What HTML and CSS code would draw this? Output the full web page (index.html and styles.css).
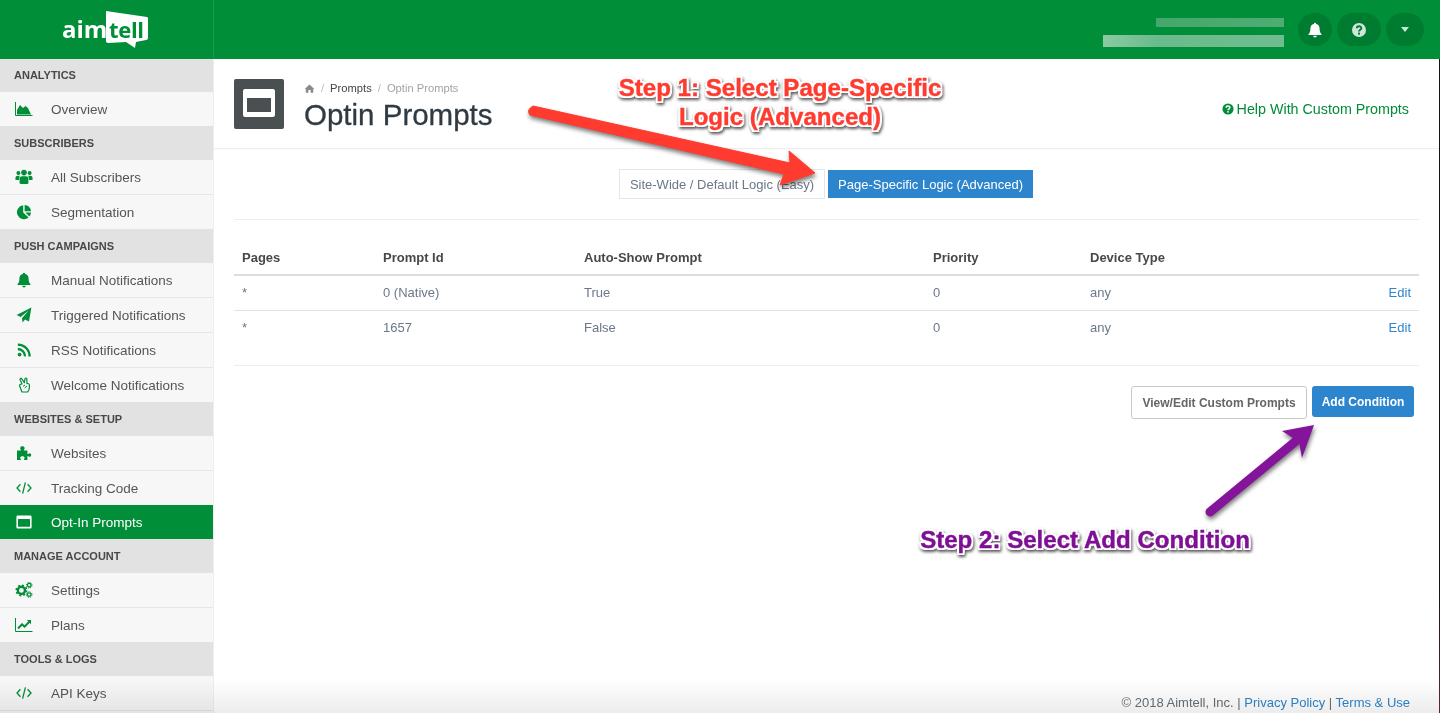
FILE: index.html
```html
<!DOCTYPE html>
<html lang="en">

<head>
  <meta charset="UTF-8" />
  <meta name="viewport" content="width=device-width,initial-scale=1.0" />
  <title>Optin Prompts</title>
  <link rel="stylesheet" href="styles.css">
</head>

<body>
  <header class="topbar">
    <a class="brand" href="#">
      <svg width="90" height="40" viewBox="0 0 90 40">
        <path d="M44 0 L85 6 Q86 6 86 8 V27 Q86 29 84 29 L74 31 L73 37 L64 31 L46 32 Q44 32 44 30 Z" fill="#fff" />
        <text x="0" y="27" class="brand-aim">aim</text>
        <text x="47" y="27" class="brand-tell">tell</text>
      </svg>
    </a>
    <div class="topbar-right">
      <div class="user-blur">
        <span class="blur-one"></span>
        <span class="blur-two"></span>
      </div>
      <button class="top-btn bell-btn">
        <svg class="ic" viewBox="0 0 16 16"><use href="#i-bell" /></svg>
      </button>
      <button class="top-btn help-btn">
        <svg class="ic" viewBox="0 0 16 16">
          <circle cx="8" cy="8" r="7" fill="#cfe6d8" />
          <path d="M5.8 6.3 C5.8 3.6 10.3 3.6 10.3 6.2 C10.3 7.8 8 7.8 8 9.6" fill="none" stroke="#007c31" stroke-width="1.9" />
          <rect x="7" y="10.6" width="2" height="2" fill="#007c31" />
        </svg>
      </button>
      <button class="top-btn caret-btn"><span class="caret"></span></button>
    </div>
  </header>

  <div class="layout">
    <nav class="sidebar">
      <div class="side-head">Analytics</div>
      <a class="side-item" href="#"><svg class="ic" viewBox="0 0 18 16"><use href="#i-area" /></svg>Overview</a>

      <div class="side-head">Subscribers</div>
      <a class="side-item" href="#"><svg class="ic" viewBox="0 0 18 16"><use href="#i-users" /></svg>All Subscribers</a>
      <a class="side-item" href="#"><svg class="ic" viewBox="0 0 16 16"><use href="#i-pie" /></svg>Segmentation</a>

      <div class="side-head">Push Campaigns</div>
      <a class="side-item" href="#"><svg class="ic" viewBox="0 0 16 16"><use href="#i-bell" /></svg>Manual Notifications</a>
      <a class="side-item" href="#"><svg class="ic" viewBox="0 0 16 16"><use href="#i-plane" /></svg>Triggered Notifications</a>
      <a class="side-item" href="#"><svg class="ic" viewBox="0 0 16 16"><use href="#i-rss" /></svg>RSS Notifications</a>
      <a class="side-item" href="#"><svg class="ic" viewBox="0 0 16 16"><use href="#i-peace" /></svg>Welcome Notifications</a>

      <div class="side-head">Websites &amp; Setup</div>
      <a class="side-item" href="#"><svg class="ic" viewBox="0 0 16 16"><use href="#i-puzzle" /></svg>Websites</a>
      <a class="side-item" href="#"><svg class="ic" viewBox="0 0 16 16"><use href="#i-code" /></svg>Tracking Code</a>
      <a class="side-item active" href="#"><svg class="ic" viewBox="0 0 16 16"><use href="#i-window" /></svg>Opt-In Prompts</a>

      <div class="side-head">Manage Account</div>
      <a class="side-item" href="#"><svg class="ic" viewBox="0 0 18 16"><use href="#i-cogs" /></svg>Settings</a>
      <a class="side-item" href="#"><svg class="ic" viewBox="0 0 18 16"><use href="#i-line" /></svg>Plans</a>

      <div class="side-head">Tools &amp; Logs</div>
      <a class="side-item last" href="#"><svg class="ic" viewBox="0 0 16 16"><use href="#i-code" /></svg>API Keys</a>
    </nav>

    <main class="main">
      <div class="page-head">
        <div class="page-icon"><span></span></div>
        <div class="page-titles">
          <div class="crumbs">
            <svg class="home" viewBox="0 0 16 16"><path d="M8 2 L15 8.6 L13.4 8.6 V14 H9.6 V10 H6.4 V14 H2.6 V8.6 H1 Z" fill="#8a8a8a" /></svg>
            <span class="sep">/</span>
            <a href="#">Prompts</a>
            <span class="sep">/</span>
            <span class="crumb-now">Optin Prompts</span>
          </div>
          <h1>Optin Prompts</h1>
        </div>
        <a class="help-link" href="#">
          <svg class="help-ic" viewBox="0 0 16 16">
            <circle cx="8" cy="8" r="7.4" fill="#008c38" />
            <path d="M5.6 6.2 C5.6 3.3 10.5 3.3 10.5 6.1 C10.5 7.8 8 7.8 8 9.8" fill="none" stroke="#fff" stroke-width="2" />
            <rect x="7" y="10.8" width="2" height="2" fill="#fff" />
          </svg>Help With Custom Prompts</a>
      </div>

      <div class="page-body">
        <div class="tabs">
          <a class="tab" href="#">Site-Wide / Default Logic (Easy)</a>
          <a class="tab on" href="#">Page-Specific Logic (Advanced)</a>
        </div>
        <hr>
        <table class="rules">
          <thead>
            <tr>
              <th class="c-pages">Pages</th>
              <th class="c-id">Prompt Id</th>
              <th class="c-show">Auto-Show Prompt</th>
              <th class="c-prio">Priority</th>
              <th class="c-dev">Device Type</th>
              <th></th>
            </tr>
          </thead>
          <tbody>
            <tr>
              <td>*</td>
              <td>0 (Native)</td>
              <td>True</td>
              <td>0</td>
              <td>any</td>
              <td class="edit"><a href="#">Edit</a></td>
            </tr>
            <tr>
              <td>*</td>
              <td>1657</td>
              <td>False</td>
              <td>0</td>
              <td>any</td>
              <td class="edit"><a href="#">Edit</a></td>
            </tr>
          </tbody>
        </table>
        <hr class="under-table">
        <div class="actions">
          <a class="btn btn-plain" href="#">View/Edit Custom Prompts</a>
          <a class="btn btn-blue" href="#">Add Condition</a>
        </div>
      </div>

      <footer class="foot">© 2018 Aimtell, Inc. | <a href="#">Privacy Policy</a> | <a href="#">Terms &amp; Use</a></footer>
    </main>
  </div>

  <!-- notes drawn over the screenshot -->
  <svg class="arrows" width="1440" height="713" viewBox="0 0 1440 713">
    <g class="arrow">
      <path d="M533 106 L790 163 L789 151 L815 173 L780 185 L784 174 L530 115 Q526 110 533 106 Z" fill="#ff3b30" stroke="#ff3b30" stroke-width="1" stroke-linejoin="round" />
    </g>
    <g class="arrow">
      <line x1="1210" y1="512" x2="1296" y2="441" stroke="#84149a" stroke-width="9" stroke-linecap="round" />
      <path d="M1314 425 L1302 458 L1299 442 L1282 431 Z" fill="#84149a" />
    </g>
  </svg>
  <div class="note note-red">Step 1: Select Page-Specific<br>Logic (Advanced)</div>
  <div class="note note-purple">Step 2: Select Add Condition</div>

  <div class="fade"></div>
  <div class="edge"></div>

  <svg class="defs" width="0" height="0">
    <symbol id="i-area" viewBox="0 0 18 16">
      <path d="M0.5 1 V14.5 H17.5" fill="none" stroke="currentColor" stroke-width="1" />
      <path d="M2 13.5 V9 L5 4 L8 7 L10.5 5 L13 7 L16 13.5 Z" fill="currentColor" />
    </symbol>
    <symbol id="i-users" viewBox="0 0 18 16">
      <circle cx="3.4" cy="4" r="2" fill="currentColor" />
      <circle cx="14.6" cy="4" r="2" fill="currentColor" />
      <circle cx="9" cy="3.6" r="2.8" fill="currentColor" />
      <path d="M0.5 11 V8.5 Q0.5 6.8 2.5 6.8 H4.6 L4 11 Z M17.5 11 V8.5 Q17.5 6.8 15.5 6.8 H13.4 L14 11 Z" fill="currentColor" />
      <path d="M4.6 14 V10 Q4.6 7.2 7 7.2 H11 Q13.4 7.2 13.4 10 V14 Q13.4 15 12 15 H6 Q4.6 15 4.6 14 Z" fill="currentColor" />
    </symbol>
    <symbol id="i-pie" viewBox="0 0 16 16">
      <path d="M7.2 1.2 V8.6 L12.6 13.4 A7 7 0 1 1 7.2 1.2 Z" fill="currentColor" />
      <path d="M8.6 1 A6.6 6.6 0 0 1 15 7.2 H8.6 Z" fill="currentColor" />
      <path d="M9.4 8.6 H15 A7 7 0 0 1 13.4 12.4 Z" fill="currentColor" />
    </symbol>
    <symbol id="i-bell" viewBox="0 0 16 16">
      <path d="M8 0.8 A1.1 1.1 0 0 1 9.1 2 C11.4 2.5 12.6 4.2 12.6 6.6 C12.6 9.8 13.2 11 14.6 12.4 V13 H1.4 V12.4 C2.8 11 3.4 9.8 3.4 6.6 C3.4 4.2 4.6 2.5 6.9 2 A1.1 1.1 0 0 1 8 0.8 Z" fill="currentColor" />
      <path d="M6.2 13.8 H9.8 A1.8 1.8 0 0 1 6.2 13.8 Z" fill="currentColor" />
    </symbol>
    <symbol id="i-plane" viewBox="0 0 16 16">
      <path d="M15.4 0.6 L13 14.6 L9 12.6 L6.6 15.4 L6 11.2 L12.6 3.6 L4.6 10 L0.6 8 Z" fill="currentColor" />
    </symbol>
    <symbol id="i-rss" viewBox="0 0 16 16">
      <circle cx="3.6" cy="12.6" r="1.9" fill="currentColor" />
      <path d="M1.8 7 A7.2 7.2 0 0 1 9 14.4" fill="none" stroke="currentColor" stroke-width="2.3" />
      <path d="M1.8 2.6 A11.7 11.7 0 0 1 13.6 14.4" fill="none" stroke="currentColor" stroke-width="2.3" />
    </symbol>
    <symbol id="i-peace" viewBox="0 0 16 16">
      <path d="M6 15 H11.6 Q13.4 13 13.4 10.6 V7.6 Q13 6.2 11 6.6 L10.8 1.6 Q10 0.4 9 1.6 L8.4 5.6 L5.4 1.4 Q4 1 4 2.6 L6 7 Q3.4 7 3.6 9 Z" fill="none" stroke="currentColor" stroke-width="1.2" stroke-linejoin="round" />
      <path d="M7 9.4 L9 8 M8.6 11 L11 9" fill="none" stroke="currentColor" stroke-width="1" />
    </symbol>
    <symbol id="i-puzzle" viewBox="0 0 16 16">
      <path d="M1 5.6 H5 C5 4.6 4.2 4.4 4.2 3.2 C4.2 1.8 5.2 1.2 6.4 1.2 C7.6 1.2 8.6 1.8 8.6 3.2 C8.6 4.4 7.8 4.6 7.8 5.6 H11.4 V9 C12.4 9 12.6 8.2 13.6 8.2 C14.6 8.2 15.2 9 15.2 10 C15.2 11 14.6 11.8 13.6 11.8 C12.6 11.8 12.4 11 11.4 11 V15 H8 C8 14 8.6 13.8 8.6 12.8 C8.6 11.8 7.6 11.2 6.4 11.2 C5.2 11.2 4.2 11.8 4.2 12.8 C4.2 13.8 5 14 5 15 H1 Z" fill="currentColor" />
    </symbol>
    <symbol id="i-code" viewBox="0 0 16 16">
      <path d="M4.4 4.2 L1 8 L4.4 11.8 M11.6 4.2 L15 8 L11.6 11.8 M9.4 2.4 L6.6 13.6" fill="none" stroke="currentColor" stroke-width="1.3" />
    </symbol>
    <symbol id="i-window" viewBox="0 0 16 16">
      <path fill-rule="evenodd" d="M1.6 1.6 H14.4 Q15.6 1.6 15.6 2.8 V13.2 Q15.6 14.4 14.4 14.4 H1.6 Q0.4 14.4 0.4 13.2 V2.8 Q0.4 1.6 1.6 1.6 Z M2 5 V12.8 H14 V5 Z" fill="currentColor" />
    </symbol>
    <symbol id="i-cogs" viewBox="0 0 18 16">
      <circle cx="6.4" cy="8.4" r="3.6" fill="none" stroke="currentColor" stroke-width="2.4" />
      <circle cx="6.4" cy="8.4" r="5.2" fill="none" stroke="currentColor" stroke-width="1.6" stroke-dasharray="2 2.08" />
      <circle cx="14.2" cy="3.2" r="1.8" fill="none" stroke="currentColor" stroke-width="1.3" />
      <circle cx="14.2" cy="3.2" r="2.8" fill="none" stroke="currentColor" stroke-width="1" stroke-dasharray="1.2 1.0" />
      <circle cx="14.2" cy="12.6" r="1.8" fill="none" stroke="currentColor" stroke-width="1.3" />
      <circle cx="14.2" cy="12.6" r="2.8" fill="none" stroke="currentColor" stroke-width="1" stroke-dasharray="1.2 1.0" />
    </symbol>
    <symbol id="i-line" viewBox="0 0 18 16">
      <path d="M0.5 1 V14.5 H17.5" fill="none" stroke="currentColor" stroke-width="1" />
      <path d="M3 11.5 L7 7.4 L9.6 9.6 L15 4" fill="none" stroke="currentColor" stroke-width="2" />
      <path d="M11.8 3 H16 V7.2 Z" fill="currentColor" />
    </symbol>
  </svg>
</body>

</html>
```

FILE: styles.css
```css
* {
  box-sizing: border-box;
}

html,
body {
  margin: 0;
  height: 100%;
}

body {
  position: relative;
  height: 713px;
  overflow: hidden;
  background: #fff;
  color: #6b7888;
  font-family: "Liberation Sans", Arial, sans-serif;
  font-size: 13px;
}

a {
  text-decoration: none;
  color: inherit;
}

.defs {
  position: absolute;
}

/* top bar */
.topbar {
  display: flex;
  height: 59px;
  background: #008e38;
}

.brand {
  display: flex;
  justify-content: center;
  align-items: flex-start;
  width: 214px;
  padding: 11px 0 0;
  border-right: 1px solid #1d9a4e;
}

.brand-aim {
  fill: #fff;
  font: bold 24px "Open Sans", "Liberation Sans", sans-serif;
}

.brand-tell {
  fill: #008e38;
  font: bold 22px "Open Sans", "Liberation Sans", sans-serif;
  letter-spacing: -0.3px;
}

.topbar-right {
  display: flex;
  flex: 1;
  justify-content: flex-end;
  align-items: flex-start;
  gap: 5px;
  padding: 13px 16px 0 0;
}

.user-blur {
  display: flex;
  flex-direction: column;
  align-items: flex-end;
  margin-right: 9px;
  padding-top: 5px;
}

.user-blur span {
  display: block;
}

.blur-one {
  width: 128px;
  height: 9px;
  background: linear-gradient(90deg, #45a76c, #4fad74);
}

.blur-two {
  width: 181px;
  height: 12px;
  margin-top: 8px;
  background: linear-gradient(90deg, #8ccaa4, #6abb8b 30%, #6fbd8e);
}

.top-btn {
  display: flex;
  justify-content: center;
  align-items: center;
  height: 33px;
  padding: 0;
  border: 0;
  border-radius: 17px;
  background: #007c31;
  color: #fff;
}

.top-btn .ic {
  width: 16px;
  height: 16px;
  margin: 0;
  color: #fff;
}

.bell-btn {
  width: 34px;
}

.help-btn {
  width: 44px;
}

.caret-btn {
  width: 38px;
}

.caret {
  width: 0;
  height: 0;
  border-left: 4.5px solid transparent;
  border-right: 4.5px solid transparent;
  border-top: 5px solid #cfe6d8;
}

/* layout */
.layout {
  display: flex;
  height: 654px;
}

.sidebar {
  width: 214px;
  flex-shrink: 0;
  overflow: hidden;
  background: #f7f7f7;
  border-right: 1px solid #eeeeee;
}

.side-head {
  display: flex;
  align-items: center;
  height: 34px;
  padding-left: 14px;
  background: #e2e2e2;
  color: #484848;
  font-size: 11px;
  font-weight: bold;
  text-transform: uppercase;
}

.side-head:first-child {
  height: 33px;
  padding-bottom: 1px;
}

.side-item {
  display: flex;
  align-items: center;
  height: 34px;
  color: #555;
  font-size: 13.5px;
}

.side-item + .side-item {
  height: 35px;
  border-top: 1px solid #e6e6e6;
}

.side-item.active {
  height: 34px;
  border-top: 0;
  background: #008e38;
  color: #fff;
}

.side-item.last {
  height: 35px;
  border-bottom: 1px solid #e6e6e6;
}

.ic {
  width: 18px;
  height: 16px;
  margin: 0 18px 0 15px;
  color: #008e38;
  flex-shrink: 0;
}

.active .ic {
  color: #fff;
}

/* main column */
.main {
  display: flex;
  flex: 1;
  flex-direction: column;
  min-width: 0;
}

.page-head {
  display: flex;
  align-items: flex-start;
  height: 90px;
  padding: 20px 31px 0 20px;
  border-bottom: 1px solid #eeeeee;
  box-shadow: 0 1px 2px rgba(0, 0, 0, 0.02);
}

.page-icon {
  display: flex;
  justify-content: center;
  align-items: center;
  width: 50px;
  height: 50px;
  padding-bottom: 2px;
  border-radius: 2px;
  background: #4a4f52;
}

.page-icon span {
  display: block;
  width: 32px;
  height: 28px;
  border: solid #fff;
  border-width: 9px 4px 5px;
  border-radius: 2px;
}

.page-titles {
  flex: 1;
  padding-left: 20px;
}

.crumbs {
  display: flex;
  align-items: center;
  gap: 6px;
  height: 18px;
  font-size: 11.2px;
  color: #a3a3a3;
}

.crumbs a {
  color: #444;
}

.home {
  width: 11px;
  height: 11px;
}

.sep {
  color: #bbb;
}

.page-titles h1 {
  margin: 1px 0 0;
  color: #303a42;
  font-size: 29.5px;
  font-weight: normal;
  line-height: 34px;
  -webkit-text-stroke: 0.3px #303a42;
}

.help-link {
  display: flex;
  align-items: center;
  margin-top: 22px;
  color: #008c38;
  font-size: 14.3px;
}

.help-ic {
  width: 12px;
  height: 12px;
  margin-right: 3px;
}

.page-body {
  padding: 20px 21px 0 20px;
}

.tabs {
  display: flex;
  justify-content: center;
  gap: 2px;
}

.tab {
  display: flex;
  align-items: center;
  height: 30px;
  padding: 0 10px;
  border: 1px solid #e6e6e6;
  font-size: 13px;
}

.tab.on {
  border-color: #fff;
  background: #2d86cd;
  color: #fff;
}

hr {
  height: 1px;
  margin: 20px 0;
  border: 0;
  background: #eeeeee;
}

.rules {
  width: 100%;
  border-collapse: collapse;
  table-layout: fixed;
}

.rules th {
  height: 35px;
  padding: 1px 8px 0;
  border-bottom: 2px solid #dddddd;
  color: #484848;
  font-size: 13px;
  font-weight: bold;
  text-align: left;
}

.rules td {
  height: 35px;
  padding: 0 8px;
  border-bottom: 1px solid #e2e2e2;
  font-size: 13px;
}

.rules tr:last-child td {
  border-bottom: 0;
}

.c-pages {
  width: 141px;
}

.c-id {
  width: 201px;
}

.c-show {
  width: 349px;
}

.c-prio {
  width: 157px;
}

.c-dev {
  width: 198px;
}

.edit {
  text-align: right;
  color: #2d86cd;
}

.under-table {
  margin-top: 20px;
}

.actions {
  display: flex;
  justify-content: flex-end;
  align-items: flex-start;
  gap: 5px;
  padding-right: 5px;
}

.btn {
  display: flex;
  justify-content: center;
  align-items: center;
  border-radius: 3px;
  font-size: 12px;
  font-weight: bold;
}

.btn-plain {
  width: 176px;
  height: 33px;
  border: 1px solid #c8c8c8;
  color: #666;
}

.btn-blue {
  width: 102px;
  height: 31px;
  background: #2d86cd;
  color: #fff;
}

.foot {
  margin-top: auto;
  padding: 0 30px 2px 0;
  color: #666f78;
  font-size: 13px;
  line-height: 16px;
  text-align: right;
}

.foot a {
  color: #2d86cd;
}

/* annotations over the page */
.arrows {
  position: absolute;
  top: 0;
  left: 0;
  pointer-events: none;
}

.arrow {
  filter: drop-shadow(1px 3px 2px rgba(0, 0, 0, 0.5));
}

.note {
  position: absolute;
  font-size: 24.1px;
  font-weight: bold;
  line-height: 29px;
  text-align: center;
  white-space: nowrap;
  -webkit-text-stroke: 0.4px currentColor;
  text-shadow: 2px 0 0 #fff, -2px 0 0 #fff, 0 2px 0 #fff, 0 -2px 0 #fff, 2px 2px 0 #fff, -2px 2px 0 #fff, 2px -2px 0 #fff, -2px -2px 0 #fff;
  filter: drop-shadow(1px 2px 1.5px rgba(0, 0, 0, 0.65));
}

.note-red {
  top: 73px;
  left: 600px;
  width: 360px;
  color: #ff3b30;
}

.note-purple {
  top: 525px;
  left: 900px;
  width: 370px;
  color: #7f0f95;
}

.fade {
  position: absolute;
  left: 0;
  right: 0;
  bottom: 0;
  height: 34px;
  background: linear-gradient(#ffffff, #ececec);
  mix-blend-mode: multiply;
  pointer-events: none;
}

.edge {
  position: absolute;
  top: 59px;
  right: 0;
  bottom: 0;
  width: 1px;
  background: linear-gradient(#14101c 80%, #5a2a2a);
}
```
